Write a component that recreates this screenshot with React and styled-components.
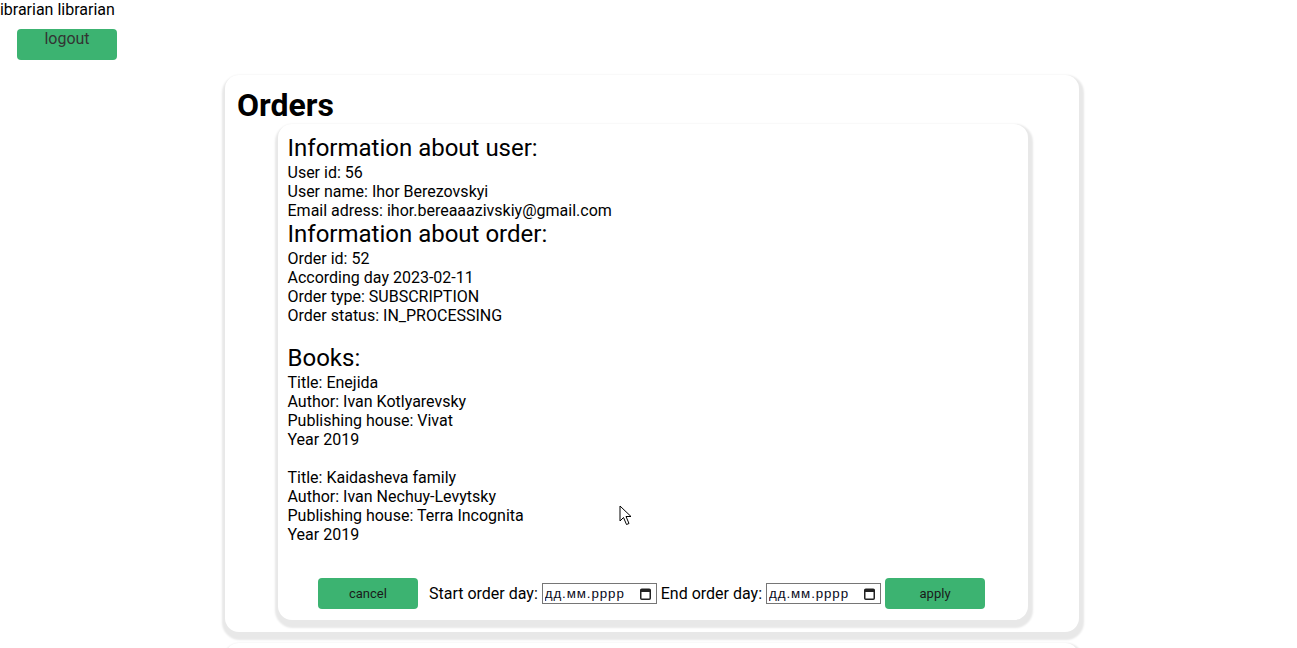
import React from 'react';
import styled, { createGlobalStyle } from 'styled-components';

const GlobalStyle = createGlobalStyle`
  html, body {
    margin: 0;
    padding: 0;
    background: #fff;
    overflow: hidden;
  }
  body {
    font-family: Roboto, "Liberation Sans", Arial, sans-serif;
    font-size: 16px;
    line-height: 19px;
    color: #000;
  }
`;

const Header = styled.div`
  display: flex;
  flex-direction: column;
  align-items: flex-start;
`;

const UserName = styled.div`
  margin-left: -4px;
  line-height: 19px;
`;

const GreenButton = styled.button`
  width: 100px;
  height: 31px;
  border: none;
  border-radius: 4px;
  background: #3cb371;
  color: ${(p) => (p.small ? '#1a1a1a' : '#333')};
  font-family: Roboto, "Liberation Sans", Arial, sans-serif;
  font-size: ${(p) => (p.small ? '13px' : '16px')};
  line-height: ${(p) => (p.small ? '31px' : '19px')};
  padding: 0;
  display: block;
  flex-shrink: 0;
  text-align: center;
  cursor: pointer;
`;

const LogoutButton = styled(GreenButton)`
  margin: 10px 0 0 17px;
  display: flex;
  justify-content: center;
  align-items: flex-start;
`;

const Card = styled.section`
  width: 854px;
  box-sizing: border-box;
  margin: ${(p) => (p.first ? '15px' : '11px')} 0 0 225px;
  padding: 12px 11px 12px 12px;
  background: #fff;
  border-radius: 14px;
  box-shadow: 1px 4px 2px 4px #e8e8e8, 2px 4px 2px 0 #d2d2d2;
  min-height: ${(p) => (p.first ? 'auto' : '300px')};
`;

const Title = styled.h1`
  margin: 0;
  font-size: 32px;
  line-height: 37px;
  font-weight: 700;
`;

const Details = styled.div`
  position: relative;
  width: 750px;
  box-sizing: border-box;
  margin: 0 auto;
  padding: 10px 11px 11px 10px;
  background: #fff;
  border-radius: 14px;
  box-shadow: 1px 4px 2px 4px #e8e8e8, 2px 4px 2px 0 #d0d0d0;
`;

const SectionTitle = styled.h2`
  margin: ${(p) => (p.spaced ? '19px' : '0')} 0 0;
  font-size: 24px;
  line-height: 29px;
  font-weight: 400;
`;

const Line = styled.div`
  line-height: 19px;
`;

const Book = styled.div`
  & + & {
    margin-top: 19px;
  }
`;

const Actions = styled.div`
  display: flex;
  align-items: center;
  justify-content: center;
  margin-top: 34px;
  padding-right: 1px;
`;

const Label = styled.span`
  margin: 0 4px 0 ${(p) => p.offset || 0}px;
  font-size: 16px;
  white-space: nowrap;
`;

const DateField = styled.label`
  display: inline-flex;
  align-items: center;
  justify-content: space-between;
  box-sizing: border-box;
  width: 115px;
  height: 21px;
  margin-right: 4px;
  padding: 0 5px 0 2px;
  border: 1px solid #767676;
  background: #fff;
  flex-shrink: 0;
`;

const DateInput = styled.input`
  width: 86px;
  border: none;
  outline: none;
  padding: 0;
  margin: 0;
  font-family: "Liberation Sans", Arial, sans-serif;
  font-size: 13.33px;
  letter-spacing: 0.9px;
  background: transparent;
  &::placeholder {
    color: #0a0a1a;
    opacity: 1;
  }
`;

const Pointer = styled.svg`
  position: absolute;
  left: 341px;
  top: 381px;
  pointer-events: none;
`;

const CalendarIcon = () => (
  <svg width="11" height="12" viewBox="0 0 11 12">
    <rect x="0.75" y="1.25" width="9.5" height="10" rx="1" fill="none" stroke="#222" strokeWidth="1.5" />
    <rect x="0.75" y="1.25" width="9.5" height="2.75" fill="#222" />
  </svg>
);

const DatePicker = () => (
  <DateField>
    <DateInput type="text" placeholder="дд.мм.рррр" />
    <CalendarIcon />
  </DateField>
);

const books = [
  { title: 'Enejida', author: 'Ivan Kotlyarevsky', house: 'Vivat', year: 2019 },
  { title: 'Kaidasheva family', author: 'Ivan Nechuy-Levytsky', house: 'Terra Incognita', year: 2019 },
];

export default function App() {
  return (
    <>
      <GlobalStyle />
      <Header>
        <UserName>librarian librarian</UserName>
        <LogoutButton>logout</LogoutButton>
      </Header>
      <Card first>
        <Title>Orders</Title>
        <Details>
          <SectionTitle>Information about user:</SectionTitle>
          <Line>User id: 56</Line>
          <Line>User name: Ihor Berezovskyi</Line>
          <Line>Email adress: ihor.bereaaazivskiy@gmail.com</Line>
          <SectionTitle>Information about order:</SectionTitle>
          <Line>Order id: 52</Line>
          <Line>According day 2023-02-11</Line>
          <Line>Order type: SUBSCRIPTION</Line>
          <Line>Order status: IN_PROCESSING</Line>
          <SectionTitle spaced>Books:</SectionTitle>
          {books.map((b) => (
            <Book key={b.title}>
              <Line>Title: {b.title}</Line>
              <Line>Author: {b.author}</Line>
              <Line>Publishing house: {b.house}</Line>
              <Line>Year {b.year}</Line>
            </Book>
          ))}
          <Actions>
            <GreenButton small>cancel</GreenButton>
            <Label offset={11}>Start order day:</Label>
            <DatePicker />
            <Label>End order day:</Label>
            <DatePicker />
            <GreenButton small>apply</GreenButton>
          </Actions>
          <Pointer width="14" height="22" viewBox="0 0 14 22">
            <path d="M1 1 L1 16 L4.5 12.5 L7.5 19.5 L10 18.5 L7 11.5 L12 11.5 Z" fill="#fff" stroke="#000" strokeWidth="1" strokeLinejoin="round" />
          </Pointer>
        </Details>
      </Card>
      <Card />
    </>
  );
}
